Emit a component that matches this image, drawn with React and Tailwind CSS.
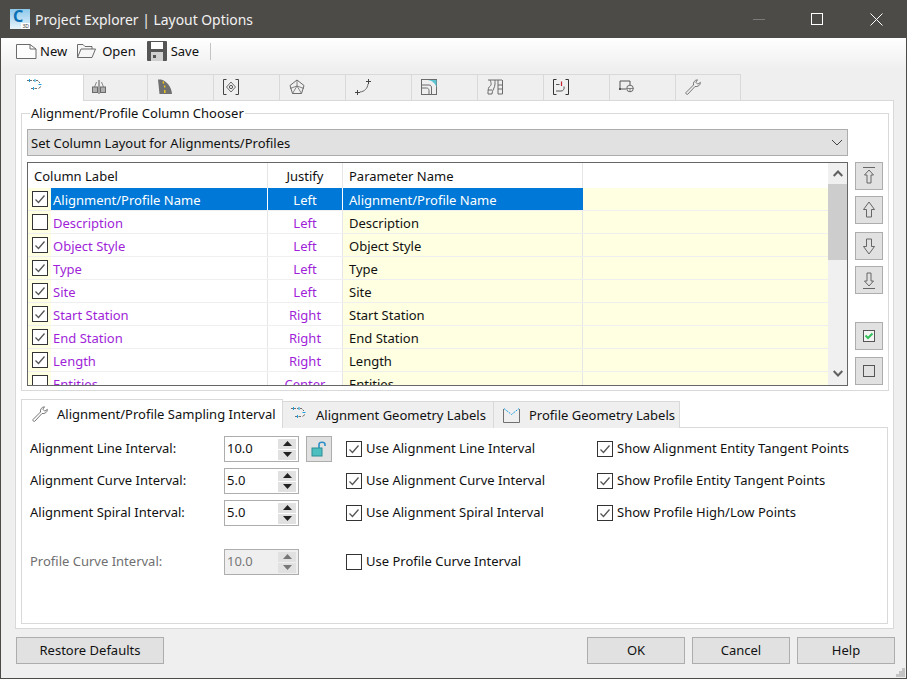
import React from 'react';

const rows = [
  { label: 'Alignment/Profile Name', justify: 'Left', on: true, selected: true },
  { label: 'Description', justify: 'Left', on: false },
  { label: 'Object Style', justify: 'Left', on: true },
  { label: 'Type', justify: 'Left', on: true },
  { label: 'Site', justify: 'Left', on: true },
  { label: 'Start Station', justify: 'Right', on: true },
  { label: 'End Station', justify: 'Right', on: true },
  { label: 'Length', justify: 'Right', on: true },
  { label: 'Entities', justify: 'Center', on: false },
];

const formRows = [
  { label: 'Alignment Line Interval:', value: '10.0', use: 'Use Alignment Line Interval', show: 'Show Alignment Entity Tangent Points', lock: true },
  { label: 'Alignment Curve Interval:', value: '5.0', use: 'Use Alignment Curve Interval', show: 'Show Profile Entity Tangent Points' },
  { label: 'Alignment Spiral Interval:', value: '5.0', use: 'Use Alignment Spiral Interval', show: 'Show Profile High/Low Points' },
];

function Check({ on }) {
  return (
    <span className="flex h-[16px] w-[16px] shrink-0 items-center justify-center border border-[#333333] bg-white">
      {on && (
        <svg width="12" height="12" viewBox="0 0 12 12" fill="none">
          <path d="M1.5 6.5L4.5 9.5L10.5 2.5" stroke="#555555" strokeWidth="1.3" />
        </svg>
      )}
    </span>
  );
}

function Svg({ children, size = 16 }) {
  return (
    <svg width={size} height={size} viewBox="0 0 16 16" fill="none" stroke="#6b6b6b" strokeWidth="1">
      {children}
    </svg>
  );
}

function AlignIcon() {
  return (
    <Svg>
      <path d="M1 1.5H3M4 1.5H6M7 1.5H8.5M10 1.5H12M12.5 2.5L14 4M15 7.5L12.5 9.5M5 9.5H7M8.5 9.5H11" stroke="#707070" />
      <path d="M3.5 0V3M9 0V3M12.5 5.5H15.5M7.5 8V11" stroke="#1ba1e2" />
    </Svg>
  );
}

const tabIcons = [
  <AlignIcon key="a" />,
  <Svg key="b">
    <path d="M8 1V15" stroke="#555555" />
    <path d="M5.5 3L3.5 8M10.5 3L12.5 8" stroke="#888888" />
    <rect x="1.5" y="8" width="5" height="5.5" fill="#b0b0b0" />
    <rect x="9.5" y="8" width="5" height="5.5" fill="#b0b0b0" />
  </Svg>,
  <Svg key="c">
    <path d="M1 .5H4C10 2 14.5 8 15 15H2.5z" fill="#707070" stroke="none" />
    <path d="M6 2.5L6.7 4.5M7.5 6.5L7.8 8.5M7.8 11V14" stroke="#f6c915" strokeWidth="1.4" />
  </Svg>,
  <Svg key="d">
    <path d="M3.5 .5H.5V15.5H3.5M12.5 .5H15.5V15.5H12.5" stroke="#444444" />
    <path d="M8 3L12.5 8L8 13L3.5 8z" />
    <circle cx="8" cy="8" r="1.6" stroke="#555555" />
  </Svg>,
  <Svg key="e">
    <path d="M8 1L15 6.5L12.5 14.5H3.5L1 6.5z" />
    <path d="M1 9.5L8 7L15 9.5M8 1V7M3.5 14.5L8 7L12.5 14.5" strokeWidth=".8" />
  </Svg>,
  <Svg key="f">
    <path d="M5 13C9.5 12.5 12.5 9.5 13 5" stroke="#666666" />
    <path d="M0 13.5H5M2.5 11V16M11 2.5H16M13.5 0V5" stroke="#444444" />
  </Svg>,
  <Svg key="g">
    <rect x=".5" y=".5" width="15" height="15" />
    <path d="M7 1H15.5V9C15 5 12 2 7 1z" fill="#5cc3d0" stroke="none" />
    <path d="M.5 6H8C10 6 10.5 7.5 10.5 9V15.5M.5 9H5.5C7 9 8 10 8 11.5V15.5" />
  </Svg>,
  <Svg key="h">
    <path d="M1 1H15M3 1C5 5 4 7 2 8C1 10 1 12 1 15H5C5 11 8 9 8 5C8 3 8 2 8 1M11 1V15H15.5V1M11 6H15.5M11 10H15.5" />
    <path d="M1 11H5" />
  </Svg>,
  <Svg key="i">
    <path d="M3.5 .5H.5V15.5H3.5M12.5 .5H15.5V15.5H12.5" stroke="#333333" />
    <path d="M3 5.5H6.5M3 12H8C10.5 12 11.5 10 11 7.5" stroke="#555555" />
    <path d="M8.5 2.5V7" stroke="#c02030" strokeWidth="1.2" />
  </Svg>,
  <Svg key="j">
    <path d="M1 10V2H11V6" stroke="#555555" />
    <path d="M1 10H7" stroke="#555555" />
    <rect x="0" y="9" width="2" height="2" fill="#555555" stroke="none" />
    <circle cx="11" cy="9.5" r="3.3" />
    <path d="M7.5 9.5H14.5M11 9.5V13" strokeWidth=".8" />
  </Svg>,
  <WrenchIcon key="k" />,
];

function WrenchIcon() {
  return (
    <Svg>
      <path d="M1 13.5L8.5 6C8 3.5 9.5 1 12.5 .8L10.8 3.2L12.8 5.2L15.4 3.4C15.4 6.5 12.5 8 10 7.5L2.7 15.3C1.8 15.8 .5 14.6 1 13.5z" stroke="#757575" />
    </Svg>
  );
}

function ProfileIcon() {
  return (
    <svg width="17" height="16" viewBox="0 0 17 16" fill="none">
      <path d="M.5 2V15.5H16.5V2" stroke="#707070" />
      <path d="M1 1.5L8.5 7.5L16 1.5" stroke="#1ba1e2" strokeDasharray="2 1" />
    </svg>
  );
}

function ArrowBtn({ d, mt = '' }) {
  return (
    <button className={`flex h-[28px] w-[28px] items-center justify-center border border-[#adadad] bg-[#e1e1e1] ${mt}`}>
      <svg width="16" height="20" viewBox="0 0 16 20" fill="none" stroke="#666666">
        <path d={d} />
      </svg>
    </button>
  );
}

function Triangle({ up, color = '#222222' }) {
  return (
    <svg width="9" height="5" viewBox="0 0 9 5">
      <path d={up ? 'M4.5 0L9 5H0z' : 'M4.5 5L9 0H0z'} fill={color} />
    </svg>
  );
}

function Spin({ value, disabled }) {
  const arrow = disabled ? '#777777' : '#222222';
  return (
    <div className={`flex h-[26px] w-[75px] items-center justify-between border pl-[2px] pr-[2px] ${disabled ? 'border-[#adadad] bg-[#efefef] text-[#777777]' : 'border-[#adadad] bg-white'}`}>
      <span className="-mt-[2px]">{value}</span>
      <div className="flex w-[18px] flex-col gap-[1px]">
        <span className="flex h-[10px] items-center justify-center bg-[#e1e1e1]"><Triangle up color={arrow} /></span>
        <span className="flex h-[10px] items-center justify-center bg-[#e1e1e1]"><Triangle color={arrow} /></span>
      </div>
    </div>
  );
}

function CheckLabel({ text }) {
  return (
    <label className="flex items-center gap-[4px] whitespace-nowrap">
      <Check on={text !== 'Use Profile Curve Interval'} />
      <span className="-mt-[3px]">{text}</span>
    </label>
  );
}

function FooterBtn({ children, width = 'w-[98px]' }) {
  return (
    <button className={`h-[27px] ${width} border border-[#adadad] bg-[#e1e1e1] pb-[2px] text-center`}>{children}</button>
  );
}

export default function App() {
  return (
    <div
      className="relative flex h-[679px] w-[907px] flex-col overflow-hidden border-x border-b border-[#4d4b48] bg-[#efefef] text-[13px] leading-[18px] whitespace-nowrap text-[#111111]"
      style={{ fontFamily: '"Noto Sans", sans-serif' }}
    >
      {/* Barre de titre */}
      <div className="-mx-[1px] flex h-[38px] shrink-0 items-center bg-[#4d4b48] pl-[10px] text-[#ffffff]">
        <div className="flex h-[20px] w-[20px] flex-col bg-gradient-to-b from-[#8cc8ea] to-[#e8f4fb]">
          <span className="h-[14px] pl-[3px] text-[16px] font-bold leading-[15px] text-[#0a6fb5]">C</span>
          <span className="ml-auto h-[6px] bg-white px-[1px] text-[5px] leading-[6px] text-[#333333]">3D</span>
        </div>
        <span className="ml-[5px] mt-[1px] text-[13.9px] text-[#f2f2f2]">Project Explorer | Layout Options</span>
        <div className="ml-auto flex items-center">
          <span className="mr-[46px] h-[1px] w-[12px] bg-[#7a7a7a]" />
          <span className="mr-[47px] h-[12px] w-[12px] border border-white" />
          <svg className="mr-[24px]" width="13" height="13" viewBox="0 0 13 13" stroke="#ffffff" strokeWidth="1">
            <path d="M.5 .5L12.5 12.5M12.5 .5L.5 12.5" />
          </svg>
        </div>
      </div>

      {/* Barre d'outils */}
      <div className="flex h-[32px] shrink-0 items-center bg-gradient-to-b from-white to-[#efefef] pb-[6px] pl-[15px]">
        <svg width="21" height="15" viewBox="0 0 21 15" fill="#fdfdfd" stroke="#6b6b6b">
          <path d="M.5 .5H14L20 5V14.5H.5z" />
          <path d="M14 .5V5H20" fill="none" />
        </svg>
        <span className="ml-[3px]">New</span>
        <svg className="ml-[10px]" width="19" height="14" viewBox="0 0 19 14" fill="#f6f6f6" stroke="#6b6b6b">
          <path d="M.5 13.5V.5H6L8 2.5H15V5" />
          <path d="M.5 13.5L4 5H18.5L15 13.5z" />
        </svg>
        <span className="ml-[6px]">Open</span>
        <svg className="ml-[11px]" width="20" height="20" viewBox="0 0 20 20" fill="#555555">
          <rect width="20" height="20" rx="1" />
          <rect x="4" y="1" width="12" height="7" fill="#ffffff" />
          <rect x="4" y="11" width="12" height="9" fill="#d0d0d0" />
          <rect x="6" y="14" width="3" height="3" fill="#555555" />
        </svg>
        <span className="ml-[4px]">Save</span>
        <span className="ml-[11px] h-[17px] w-[1px] bg-[#c4c4c4]" />
      </div>

      {/* Onglets principaux */}
      <div className="ml-[14px] mt-[4px] flex h-[26px] shrink-0">
        {tabIcons.map((icon, i) => (
          <div
            key={i}
            className={`flex h-[27px] items-start border-t border-r border-[#d9d9d9] pt-[4px] ${i === 0 ? 'z-10 w-[69px] border-l bg-white pl-[10px]' : i === 1 ? 'w-[64px] pl-[7px]' : i === 10 ? 'w-[65px] pl-[9px]' : 'w-[66px] pl-[9px]'}`}
          >
            {icon}
          </div>
        ))}
      </div>

      <div className="ml-[14px] h-[529px] w-[879px] shrink-0 border border-[#d9d9d9] bg-white pl-[5px] pt-[12px]">
        {/* Choix des colonnes */}
        <div className="relative h-[278px] w-[868px] border border-[#d9d9d9] pl-[5px] pt-[15px]">
          <span className="absolute -top-[10px] left-[8px] bg-white px-[1px]">Alignment/Profile Column Chooser</span>
          <div className="flex h-[27px] w-[821px] items-center justify-between border border-[#adadad] bg-[#e1e1e1] pl-[3px] pr-[4px]">
            <span>Set Column Layout for Alignments/Profiles</span>
            <svg width="12" height="7" viewBox="0 0 12 7" fill="none" stroke="#444444">
              <path d="M1 1L6 6L11 1" />
            </svg>
          </div>

          <div className="mt-[6px] flex">
            <div className="flex h-[224px] w-[821px] overflow-hidden border border-[#666666] bg-white">
              <div className="w-[800px]">
                <div className="grid h-[25px] grid-cols-[240px_75px_240px_245px] bg-white">
                  <div className="border-r border-[#e6e6e6] pl-[6px] pt-[4px]">Column Label</div>
                  <div className="border-r border-[#e6e6e6] pt-[4px] text-center">Justify</div>
                  <div className="border-r border-[#e6e6e6] pl-[6px] pt-[4px]">Parameter Name</div>
                  <div />
                </div>
                {rows.map((row) => (
                  <div key={row.label} className="grid h-[23px] grid-cols-[23px_217px_75px_240px_245px] border-b border-[#efefef] bg-[#ffffe1]">
                    <div className="flex items-center pl-[4px]"><Check on={row.on} /></div>
                    <div className={`border-r pl-[2px] pt-[3px] ${row.selected ? 'border-[#ffffff] bg-[#0078d7] text-white' : 'border-[#e6e6e6] bg-white text-[#a01fd8]'}`}>{row.label}</div>
                    <div className={`border-r pt-[3px] text-center ${row.selected ? 'border-[#ffffff] bg-[#0078d7] text-white' : 'border-[#e6e6e6] bg-white text-[#a01fd8]'}`}>{row.justify}</div>
                    <div className={`border-r pl-[6px] pt-[3px] ${row.selected ? 'border-[#0078d7] bg-[#0078d7] text-white' : 'border-[#e6e6e6]'}`}>{row.label}</div>
                    <div />
                  </div>
                ))}
              </div>
              {/* Barre de défilement */}
              <div className="flex w-[19px] flex-col items-center bg-[#f0f0f0]">
                <svg className="mt-[7px]" width="10" height="7" viewBox="0 0 10 7" fill="none" stroke="#606060" strokeWidth="2">
                  <path d="M.7 6L5 1.5L9.3 6" />
                </svg>
                <div className="mt-[7px] h-[76px] w-[19px] bg-[#cdcdcd]" />
                <svg className="mt-auto mb-[8px]" width="10" height="7" viewBox="0 0 10 7" fill="none" stroke="#606060" strokeWidth="2">
                  <path d="M.7 1L5 5.5L9.3 1" />
                </svg>
              </div>
            </div>

            <div className="ml-[7px] flex flex-col">
              <ArrowBtn d="M2 1.5H14M8 4L12.5 9H10V17H6V9H3.5z" />
              <ArrowBtn mt="mt-[6px]" d="M8 2L13.5 9.5H10.5V17H5.5V9.5H2.5z" />
              <ArrowBtn mt="mt-[8px]" d="M8 18L13.5 10.5H10.5V3H5.5V10.5H2.5z" />
              <ArrowBtn mt="mt-[6px]" d="M2 18.5H14M8 16L12.5 11H10V3H6V11H3.5z" />
              <button className="mt-[28px] flex h-[28px] w-[28px] items-center justify-center border border-[#adadad] bg-[#e1e1e1]">
                <svg width="12" height="12" viewBox="0 0 12 12" fill="#f4f4f4" stroke="#555555">
                  <rect x=".5" y=".5" width="11" height="11" />
                  <path d="M2.5 5.5L5 8L9.5 3.5" stroke="#35c05a" strokeWidth="2" fill="none" />
                </svg>
              </button>
              <button className="mt-[7px] flex h-[28px] w-[28px] items-center justify-center border border-[#adadad] bg-[#e1e1e1]">
                <span className="h-[12px] w-[12px] border border-[#555555]" />
              </button>
            </div>
          </div>
        </div>

        {/* Onglets du bas */}
        <div className="mt-[8px] flex h-[29px] items-end">
          <div className="z-10 flex h-[29px] w-[262px] items-center gap-[9px] border-x border-t border-[#d9d9d9] bg-white pl-[10px]">
            <WrenchIcon />
            <span className="-mt-[1px]">Alignment/Profile Sampling Interval</span>
          </div>
          <div className="flex h-[27px] w-[211px] items-center gap-[10px] border-t border-r border-[#d9d9d9] bg-[#efefef] pl-[7px]">
            <AlignIcon />
            <span>Alignment Geometry Labels</span>
          </div>
          <div className="flex h-[27px] w-[186px] items-center gap-[9px] border-t border-r border-[#d9d9d9] bg-[#efefef] pl-[9px]">
            <ProfileIcon />
            <span>Profile Geometry Labels</span>
          </div>
        </div>
        <div className="-mt-[1px] h-[197px] w-[867px] border border-[#d9d9d9] pl-[8px] pt-[8px]">
          {formRows.map((row) => (
            <div key={row.label} className="mb-[6px] grid h-[26px] grid-cols-[194px_75px_47px_251px_1fr] items-center">
              <span className="-mt-[2px]">{row.label}</span>
              <Spin value={row.value} />
              <div className="pl-[7px]">
                {row.lock && (
                  <button className="flex h-[26px] w-[26px] items-center justify-center border border-[#adadad] bg-[#e1e1e1]">
                    <svg width="16" height="16" viewBox="0 0 16 16" fill="none">
                      <path d="M8 7V3.5C8 .5 14 .5 14 3.5V5" stroke="#2b8fc7" strokeWidth="1.6" />
                      <rect x="1" y="7" width="10" height="8" fill="#4bbfbf" stroke="#2c8f96" />
                    </svg>
                  </button>
                )}
              </div>
              <CheckLabel text={row.use} />
              <CheckLabel text={row.show} />
            </div>
          ))}
          <div className="mt-[23px] grid h-[26px] grid-cols-[194px_75px_47px_251px_1fr] items-center">
            <span className="-mt-[2px] text-[#6f6f6f]">Profile Curve Interval:</span>
            <Spin value="10.0" disabled />
            <div />
            <CheckLabel text="Use Profile Curve Interval" />
          </div>
        </div>
      </div>

      {/* Boutons du bas */}
      <div className="flex pl-[15px] pr-[11px] pt-[8px]">
        <FooterBtn width="w-[148px]">Restore Defaults</FooterBtn>
        <div className="ml-auto flex gap-[7px]">
          <FooterBtn>OK</FooterBtn>
          <FooterBtn>Cancel</FooterBtn>
          <FooterBtn>Help</FooterBtn>
        </div>
      </div>

      <svg className="absolute bottom-[1px] right-[1px]" width="9" height="9" viewBox="0 0 9 9" fill="#c4c4c4">
        <rect x="6" y="0" width="3" height="3" />
        <rect x="3" y="3" width="3" height="3" />
        <rect x="6" y="3" width="3" height="3" />
        <rect x="0" y="6" width="3" height="3" />
        <rect x="3" y="6" width="3" height="3" />
        <rect x="6" y="6" width="3" height="3" />
      </svg>
    </div>
  );
}
